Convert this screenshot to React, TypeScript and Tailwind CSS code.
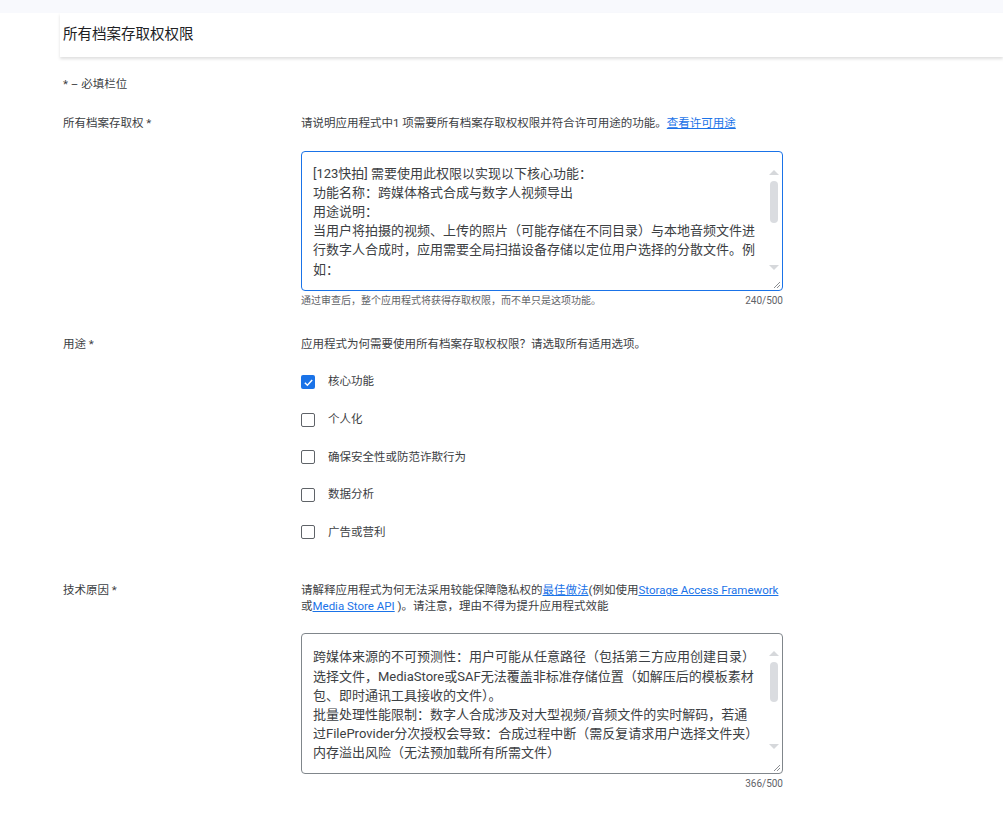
import React from "react";

const font = { fontFamily: "Roboto, 'Noto Sans CJK SC', sans-serif" };

type AreaProps = {
  lines: string[];
  height: string;
  borderClass: string;
  padTop: string;
  arrowTop: string;
  thumbGap: string;
  thumbH: string;
  downGap: string;
};

function Triangle({ up }: { up: boolean }) {
  return (
    <div
      className={
        up
          ? "w-0 h-0 border-x-[5px] border-x-transparent border-b-[5px] border-b-[#d6d8db]"
          : "w-0 h-0 border-x-[5px] border-x-transparent border-t-[5px] border-t-[#d6d8db]"
      }
    />
  );
}

function FakeTextarea({ lines, height, borderClass, padTop, arrowTop, thumbGap, thumbH, downGap }: AreaProps) {
  return (
    <div className={`relative flex w-[482px] rounded-[4px] bg-white ${height} ${borderClass}`}>
      <div className={`flex-1 pl-[11px] text-[13px] leading-[19.2px] text-[#3c4043] whitespace-nowrap overflow-hidden ${padTop}`}>
        {lines.map((l, i) => (
          <div key={i}>{l}</div>
        ))}
      </div>
      <div className={`w-[12px] mr-[2px] flex flex-col items-center ${arrowTop}`}>
        <Triangle up />
        <div className={`w-[8px] rounded-full bg-[#dadce0] ${thumbGap} ${thumbH}`} />
        <div className={downGap} />
        <Triangle up={false} />
      </div>
      <svg className="absolute right-[1px] bottom-[1px]" width="8" height="8" viewBox="0 0 8 8">
        <path d="M7 1 L1 7 M7 4 L4 7" stroke="#8a8d91" strokeWidth="1" />
      </svg>
    </div>
  );
}

function Checkbox({ checked, label }: { checked?: boolean; label: string }) {
  return (
    <div className="flex items-center h-[14px]">
      {checked ? (
        <div className="w-[14px] h-[14px] rounded-[2px] bg-[#1a73e8] flex items-center justify-center">
          <svg width="11" height="11" viewBox="0 0 12 12">
            <path d="M2 6.2 L4.8 9 L10 3.2" fill="none" stroke="white" strokeWidth="1.6" />
          </svg>
        </div>
      ) : (
        <div className="w-[14px] h-[14px] rounded-[2px] border-[1.5px] border-[#5f6368]" />
      )}
      <span className="ml-[13px] text-[11.5px] text-[#3c4043]">{label}</span>
    </div>
  );
}

export default function App() {
  const area1 = [
    "[123快拍] 需要使用此权限以实现以下核心功能：",
    "功能名称：跨媒体格式合成与数字人视频导出",
    "用途说明：",
    "当用户将拍摄的视频、上传的照片（可能存储在不同目录）与本地音频文件进",
    "行数字人合成时，应用需要全局扫描设备存储以定位用户选择的分散文件。例",
    "如：",
  ];
  const area2 = [
    "跨媒体来源的不可预测性：用户可能从任意路径（包括第三方应用创建目录）",
    "选择文件，MediaStore或SAF无法覆盖非标准存储位置（如解压后的模板素材",
    "包、即时通讯工具接收的文件）。",
    "批量处理性能限制：数字人合成涉及对大型视频/音频文件的实时解码，若通",
    "过FileProvider分次授权会导致：合成过程中断（需反复请求用户选择文件夹）",
    "内存溢出风险（无法预加载所有所需文件）",
  ];

  return (
    <div className="w-[1003px] h-[816px] bg-white overflow-hidden" style={font}>
      <div className="h-[13px] bg-[#f8f9fd]" />
      <div className="pl-[60px]">
        <div className="h-[44px] flex items-center px-[3px] bg-white shadow-[0_2px_3px_rgba(0,0,0,0.13)]">
          <span className="text-[14.5px] text-[#202124]">所有档案存取权权限</span>
        </div>

        <div className="px-[3px]">
          <div className="mt-[19px] text-[11.5px] leading-[16px] text-[#3c4043]">* – 必填栏位</div>

          {/* row 1 */}
          <div className="mt-[23px] grid grid-cols-[238px_482px]">
            <div className="text-[11.5px] leading-[16px] text-[#3c4043]">所有档案存取权 *</div>
            <div>
              <div className="text-[11.5px] leading-[16px] text-[#3c4043] whitespace-nowrap">
                请说明应用程式中1 项需要所有档案存取权权限并符合许可用途的功能。
                <span className="text-[#1a73e8] underline">查看许可用途</span>
              </div>
              <div className="mt-[20px]">
                <FakeTextarea
                  lines={area1}
                  height="h-[140px]"
                  borderClass="border border-[#1a73e8]"
                  padTop="pt-[11.5px]"
                  arrowTop="mt-[18px]"
                  thumbGap="mt-[6px]"
                  thumbH="h-[42px]"
                  downGap="mt-[42px]"
                />
              </div>
              <div className="mt-[3px] flex justify-between text-[10px] leading-[14px] text-[#5f6368]">
                <span>通过审查后，整个应用程式将获得存取权限，而不单只是这项功能。</span>
                <span>240/500</span>
              </div>
            </div>
          </div>

          {/* row 2 */}
          <div className="mt-[28px] grid grid-cols-[238px_482px]">
            <div className="text-[11.5px] leading-[16px] text-[#3c4043]">用途 *</div>
            <div>
              <div className="text-[11.5px] leading-[16px] text-[#3c4043]">
                应用程式为何需要使用所有档案存取权权限？请选取所有适用选项。
              </div>
              <div className="mt-[23px] flex flex-col gap-[23.6px]">
                <Checkbox checked label="核心功能" />
                <Checkbox label="个人化" />
                <Checkbox label="确保安全性或防范诈欺行为" />
                <Checkbox label="数据分析" />
                <Checkbox label="广告或营利" />
              </div>
            </div>
          </div>

          {/* row 3 */}
          <div className="mt-[43px] grid grid-cols-[238px_482px]">
            <div className="text-[11.5px] leading-[16px] text-[#3c4043]">技术原因 *</div>
            <div>
              <div className="text-[11.5px] leading-[16px] text-[#3c4043] whitespace-nowrap">
                <div>
                  请解释应用程式为何无法采用较能保障隐私权的
                  <span className="text-[#1a73e8] underline">最佳做法</span>
                  (例如使用<span className="text-[#1a73e8] underline">Storage Access Framework</span>
                </div>
                <div>
                  或<span className="text-[#1a73e8] underline">Media Store API</span> )。请注意，理由不得为提升应用程式效能
                </div>
              </div>
              <div className="mt-[19px]">
                <FakeTextarea
                  lines={area2}
                  height="h-[141px]"
                  borderClass="border border-[#80868b]"
                  padTop="pt-[13px]"
                  arrowTop="mt-[17px]"
                  thumbGap="mt-[6px]"
                  thumbH="h-[40px]"
                  downGap="mt-[42px]"
                />
              </div>
              <div className="mt-[3px] flex justify-end text-[10px] leading-[14px] text-[#5f6368]">
                <span>366/500</span>
              </div>
            </div>
          </div>
        </div>
      </div>
    </div>
  );
}
